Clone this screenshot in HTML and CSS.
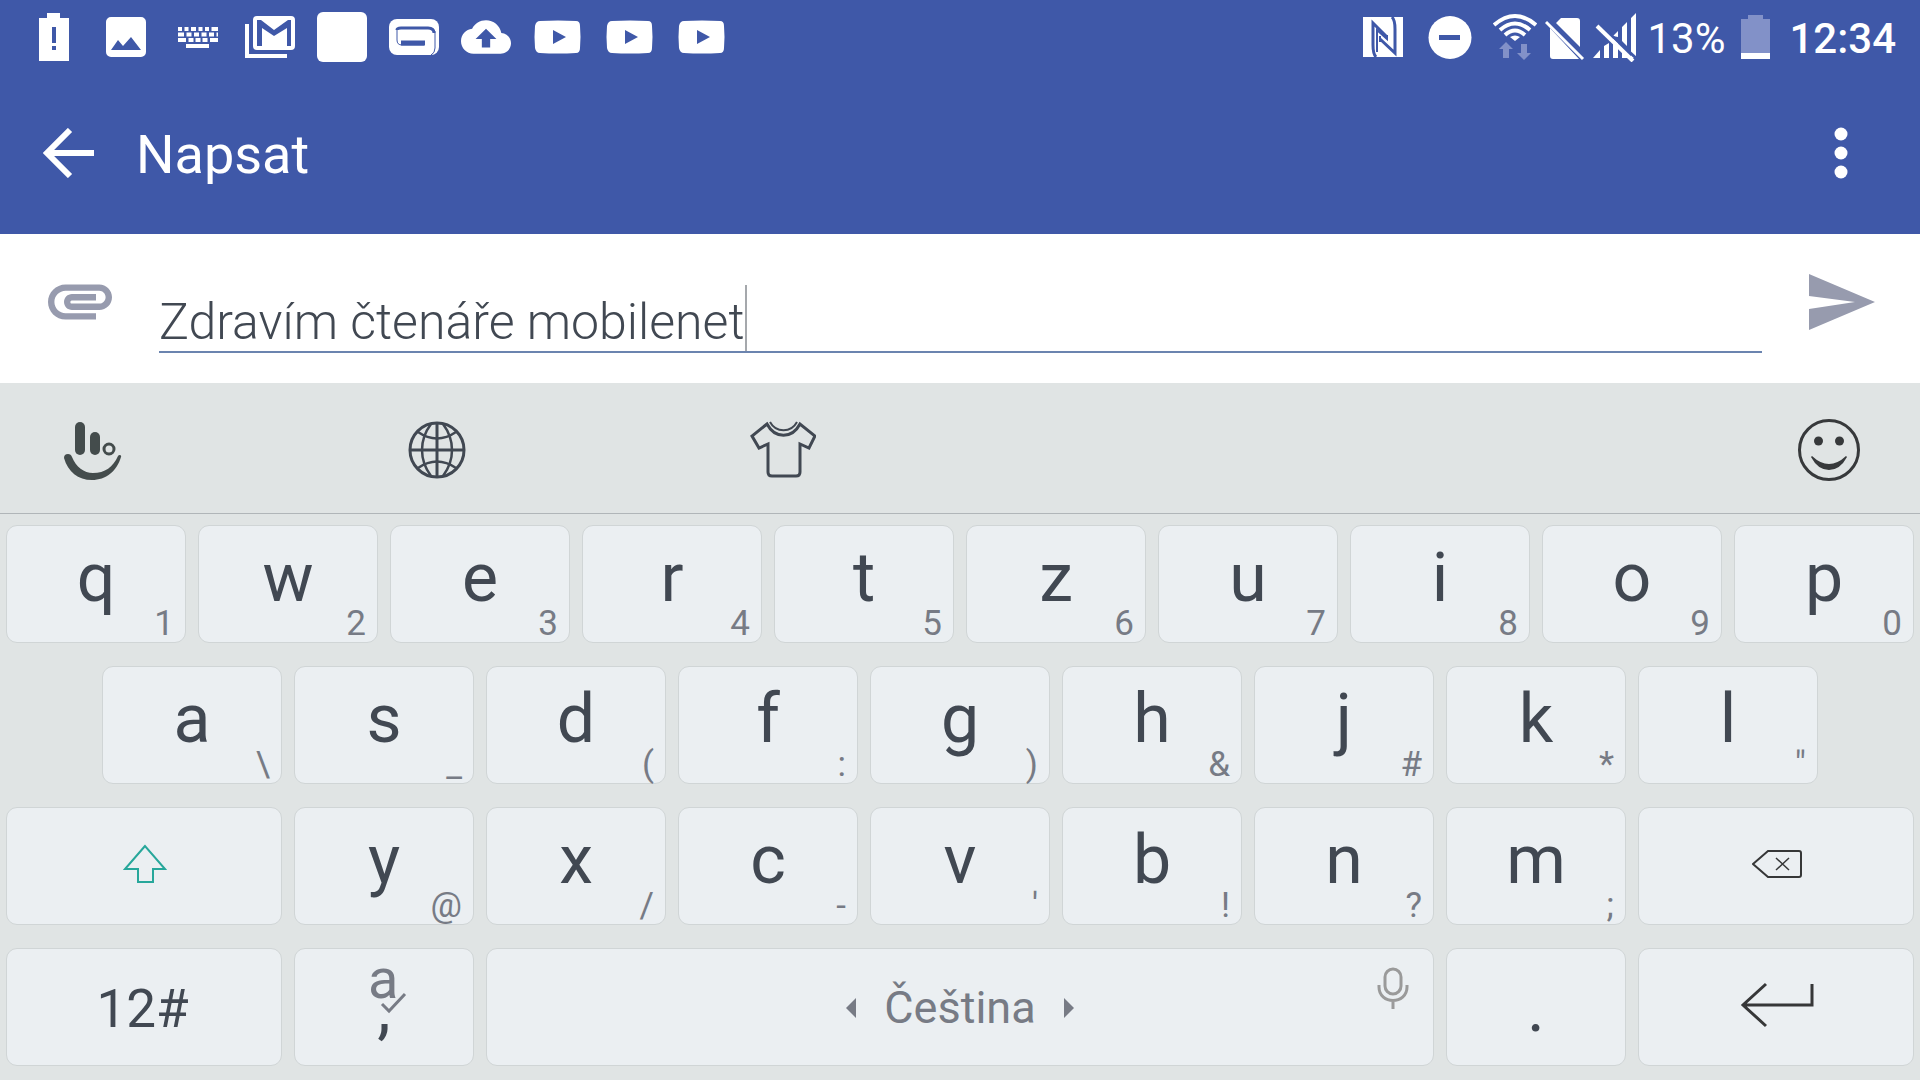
FILE: index.html
```html
<!DOCTYPE html>
<html lang="cs">
<head>
<meta charset="utf-8">
<meta name="viewport" content="width=device-width, initial-scale=1">
<title>Napsat</title>
<link rel="stylesheet" href="styles.css">
</head>
<body>
<header class="top">
  <div class="status">
    <div class="status-left">
      <svg width="50" height="50" viewBox="0 0 50 50" aria-hidden="true"><path fill="currentColor" fill-rule="evenodd" d="M18 1h13v5h9v43H10V6h8zM23 15v16h4V15zM23 34v4h4v-4z"/></svg>
      <svg width="50" height="50" viewBox="0 0 50 50" aria-hidden="true"><path fill="currentColor" fill-rule="evenodd" d="M10 5h30a5 5 0 0 1 5 5v30a5 5 0 0 1-5 5H10a5 5 0 0 1-5-5V10a5 5 0 0 1 5-5zM10 38h30L30 25l-8 9-5-6z"/></svg>
      <svg width="50" height="50" viewBox="0 0 50 50" aria-hidden="true"><g fill="none" stroke="currentColor" stroke-width="4"><path d="M5 17h40" stroke-dasharray="4 2.5 4 2.5 5 2.5 4 2.5 4 2.5 7"/><path d="M5 22.500h40" stroke-dasharray="6 2.500 5 2.500 5 2.500 5 2.500 5 2.500 5"/><path d="M5 28h40" stroke-dasharray="8 2.500 5 2 5 2 5 2.500 8"/><path d="M13 34h23"/></g></svg>
      <svg width="50" height="50" viewBox="0 0 50 50" aria-hidden="true"><path fill="none" stroke="currentColor" stroke-width="4" d="M2 12v32h40"/><path fill="currentColor" fill-rule="evenodd" d="M12 4h34q4 0 4 4v26q0 4-4 4H12q-4 0-4-4V8q0-4 4-4zM12 34h5V16l12 8 13-8v18h4V8h-3L29 18 16 8h-4z"/></svg>
      <svg width="50" height="50" viewBox="0 0 50 50" aria-hidden="true"><rect width="50" height="50" rx="6" fill="currentColor"/></svg>
      <svg width="50" height="50" viewBox="0 0 50 50" aria-hidden="true"><rect y="7" width="50" height="36" rx="8" fill="currentColor"/><g class="cut" fill="none"><path stroke-width="3" d="M8 18q0-2 4-2h27q6 0 6 5"/><path stroke-width="1" d="M8 16v12q0 5 5 5h22M46 19v17q0 5-4 7"/><path stroke-width="5" d="M12 31h24"/></g></svg>
      <svg width="50" height="50" viewBox="0 8 24 24" aria-hidden="true"><path fill="currentColor" d="M19.350 18.040C18.670 14.590 15.640 12 12 12c-2.890 0-5.400 1.640-6.650 4.040C2.340 16.360 0 18.910 0 22c0 3.310 2.690 6 6 6h13c2.760 0 5-2.240 5-5 0-2.640-2.050-4.780-4.650-4.960zM14 21v4h-4v-4H7l5-5 5 5h-3z"/></svg>
      <svg width="50" height="50" viewBox="0 0 50 50" aria-hidden="true"><path fill="currentColor" fill-rule="evenodd" d="M7 9q18-1 36 0 4 0 4 5 1 11 0 22 0 5-4 5-18 1-36 0-4 0-5-5-1-11 0-22 1-5 5-5zM20 18v14l13-7z"/></svg>
      <svg width="50" height="50" viewBox="0 0 50 50" aria-hidden="true"><path fill="currentColor" fill-rule="evenodd" d="M7 9q18-1 36 0 4 0 4 5 1 11 0 22 0 5-4 5-18 1-36 0-4 0-5-5-1-11 0-22 1-5 5-5zM20 18v14l13-7z"/></svg>
      <svg width="50" height="50" viewBox="0 0 50 50" aria-hidden="true"><path fill="currentColor" fill-rule="evenodd" d="M7 9q18-1 36 0 4 0 4 5 1 11 0 22 0 5-4 5-18 1-36 0-4 0-5-5-1-11 0-22 1-5 5-5zM20 18v14l13-7z"/></svg>
    </div>
    <div class="status-right">
      <svg width="57" height="50" viewBox="0 0 57 50" aria-hidden="true"><path fill="currentColor" d="M0 5h40v40H0z"/><g class="cut" fill="none"><path stroke-width="3" d="M13 45q-3-3-3-12V11l14 14"/><path stroke-width="2" d="M14 40V18l10 9v-4"/><path stroke-width="3" d="M29 5q3 3 3 12v24L17 27"/><path stroke-width="2" d="M17 24v6"/></g></svg>
      <svg width="57" height="50" viewBox="0 0 57 50" aria-hidden="true"><circle cx="22" cy="25.500" r="21.500" fill="currentColor"/><path class="cut" stroke-width="5" d="M11 25.500h21"/></svg>
      <svg width="44" height="50" viewBox="0 0 44 50" aria-hidden="true"><g fill="none" stroke="currentColor" stroke-width="4"><path d="M1 13q21-18 42 0"/><path d="M7 18q15-13 30 0"/><path d="M12 23q10-9 20 0"/></g><path fill="currentColor" d="M17 25q5-3 10 0l-5 4z"/><path class="faint" d="M13 30l7 7h-4v9h-6v-9H6zM28 32h6v9h4l-7 7-7-7h4z"/></svg>
      <svg width="40" height="50" viewBox="0 0 40 50" aria-hidden="true"><path fill="currentColor" d="M5 16l29 31H8q-3 0-3-3zM11 11l5-5h16q3 0 3 3v26z"/><path stroke="currentColor" stroke-width="3" d="M1 10l37 37"/></svg>
      <svg width="44" height="50" viewBox="0 0 44 50" aria-hidden="true"><path fill="currentColor" d="M0 46l7-8v8zM11 34l5-3v15h-5zM20 26l5 5v15h-5zM20 24l5-5v6zM29 15l5-5v24l-5-5zM29 38l5 5v3h-5zM38 6l5-5v45h-5z"/><path class="cut" stroke-width="3" d="M8 14l36 33"/><path stroke="currentColor" stroke-width="4" d="M4 14l36 35"/></svg>
      <span class="percent">13%</span>
      <svg width="48" height="50" viewBox="0 0 48 50" aria-hidden="true"><path class="faint" d="M15 3h15v4h7v34H8V7h7z"/><path fill="currentColor" d="M8 41h29v6H8z"/></svg>
      <time class="clock">12:34</time>
    </div>
  </div>
  <div class="appbar">
    <button class="icon-btn" type="button" aria-label="Zpět"><svg width="52" height="50" viewBox="0 0 52 50"><path fill="none" stroke="currentColor" stroke-width="6" d="M51 25H5M27 2L4 25l23 23"/></svg></button>
    <h1 class="title">Napsat</h1>
    <button class="icon-btn menu" type="button" aria-label="Další možnosti"><svg width="14" height="52" viewBox="0 0 14 52" fill="currentColor"><circle cx="7" cy="7" r="6.500"/><circle cx="7" cy="26" r="6.500"/><circle cx="7" cy="45" r="6.500"/></svg></button>
  </div>
</header>

<form class="compose">
  <button class="icon-btn compose-btn" type="button" aria-label="Přiložit"><svg width="64" height="36" viewBox="2 7 20 11"><path fill="currentColor" d="M2 12.500C2 9.460 4.460 7 7.500 7H18c2.210 0 4 1.790 4 4s-1.790 4-4 4H9.500C8.120 15 7 13.880 7 12.500S8.120 10 9.500 10H17v2H9.410c-.55 0-.55 1 0 1H18c1.100 0 2-.9 2-2s-.9-2-2-2H7.500C5.570 9 4 10.570 4 12.500S5.570 16 7.500 16H17v2H7.500C4.460 18 2 15.540 2 12.500z"/></svg></button>
  <label class="field">
    <input class="message" type="text" value="Zdravím čtenáře mobilenet" aria-label="Zpráva">
    <span class="caret"></span>
  </label>
  <button class="icon-btn compose-btn" type="submit" aria-label="Odeslat"><svg width="66" height="56" viewBox="0 0 66 56"><path fill="currentColor" d="M0 0l66 28L0 56V35l46-7L0 22z"/></svg></button>
</form>

<nav class="tools">
  <button class="icon-btn" type="button" aria-label="TouchPal"><svg class="logo" width="64" height="64" viewBox="0 0 64 64"><g fill="none" stroke="currentColor" stroke-linecap="round"><path stroke-width="10" d="M20 9v23"/><path stroke-width="10" d="M35 19v13"/></g><circle cx="49" cy="31" r="5" fill="none" stroke="currentColor" stroke-width="3"/><path fill="currentColor" d="M4 40q0-4 4-4 3 0 4 3c4 10 12 16 21 16 12 0 20-6 25-17 1-2 4-1 3 1-4 14-15 23-29 23C18 62 8 54 4 40z"/></svg></button>
  <button class="icon-btn" type="button" aria-label="Jazyk"><svg width="64" height="64" viewBox="0 0 64 64" fill="none" stroke="currentColor" stroke-width="3"><circle cx="32" cy="32" r="27"/><path d="M32 5v54M5 32h54"/><path stroke-width="2.500" d="M26 6C14 22 14 42 26 58M38 6c12 16 12 36 0 52M13 14q19 13 38 0M13 50q19-13 38 0"/></svg></button>
  <button class="icon-btn" type="button" aria-label="Motivy"><svg width="66" height="64" viewBox="0 0 66 64" fill="none" stroke="currentColor"><path stroke-width="3" d="M17 6L2 18l7 12 9-4v28q0 4 4 4h24q4 0 4-4V26l9 4 6-12L50 6c-8 15-25 15-33 0z"/><path stroke-width="2" d="M20 4c6 11 21 11 27 0"/></svg></button>
  <button class="icon-btn emoji" type="button" aria-label="Emotikony"><svg width="64" height="64" viewBox="0 0 64 64"><circle cx="32" cy="32" r="29.500" fill="none" stroke="currentColor" stroke-width="3"/><g fill="currentColor"><circle cx="21.500" cy="23" r="4.500"/><circle cx="42.500" cy="23" r="4.500"/><path d="M15 38Q32 54 49 38l1 1Q43 52 32 52T14 39z"/></g></svg></button>
</nav>

<main class="keyboard">
  <button class="key" type="button"><span class="letter">q</span><span class="hint">1</span></button>
  <button class="key" type="button"><span class="letter">w</span><span class="hint">2</span></button>
  <button class="key" type="button"><span class="letter">e</span><span class="hint">3</span></button>
  <button class="key" type="button"><span class="letter">r</span><span class="hint">4</span></button>
  <button class="key" type="button"><span class="letter">t</span><span class="hint">5</span></button>
  <button class="key" type="button"><span class="letter">z</span><span class="hint">6</span></button>
  <button class="key" type="button"><span class="letter">u</span><span class="hint">7</span></button>
  <button class="key" type="button"><span class="letter">i</span><span class="hint">8</span></button>
  <button class="key" type="button"><span class="letter">o</span><span class="hint">9</span></button>
  <button class="key" type="button"><span class="letter">p</span><span class="hint">0</span></button>

  <button class="key indent" type="button"><span class="letter">a</span><span class="hint">\</span></button>
  <button class="key" type="button"><span class="letter">s</span><span class="hint">_</span></button>
  <button class="key" type="button"><span class="letter">d</span><span class="hint">(</span></button>
  <button class="key" type="button"><span class="letter">f</span><span class="hint">:</span></button>
  <button class="key" type="button"><span class="letter">g</span><span class="hint">)</span></button>
  <button class="key" type="button"><span class="letter">h</span><span class="hint">&amp;</span></button>
  <button class="key" type="button"><span class="letter">j</span><span class="hint">#</span></button>
  <button class="key" type="button"><span class="letter">k</span><span class="hint">*</span></button>
  <button class="key" type="button"><span class="letter">l</span><span class="hint">"</span></button>

  <button class="key wide command shift" type="button" aria-label="Shift"><svg width="46" height="40" viewBox="0 0 46 40"><path fill="none" stroke="currentColor" stroke-width="2" d="M23 2L3 25h13v13h15V25h12z"/></svg></button>
  <button class="key" type="button"><span class="letter">y</span><span class="hint">@</span></button>
  <button class="key" type="button"><span class="letter">x</span><span class="hint">/</span></button>
  <button class="key" type="button"><span class="letter">c</span><span class="hint">-</span></button>
  <button class="key" type="button"><span class="letter">v</span><span class="hint">'</span></button>
  <button class="key" type="button"><span class="letter">b</span><span class="hint">!</span></button>
  <button class="key" type="button"><span class="letter">n</span><span class="hint">?</span></button>
  <button class="key" type="button"><span class="letter">m</span><span class="hint">;</span></button>
  <button class="key wide command" type="button" aria-label="Smazat"><svg width="50" height="28" viewBox="0 0 50 28" fill="none" stroke="currentColor"><path stroke-width="2" d="M1 14L16 1h31q2 0 2 2v22q0 2-2 2H16z"/><path stroke-width="1.500" d="M24 8l13 12M37 8L24 20"/></svg></button>

  <button class="key wide" type="button"><span class="mode">12#</span></button>
  <button class="key" type="button"><svg class="suggest" width="48" height="66" viewBox="0 0 48 66"><text class="suggest-letter" x="8" y="49">a</text><path fill="none" stroke="currentColor" stroke-width="3" d="M22 55l7 7 16-17"/></svg><span class="punct">,</span></button>
  <button class="key space" type="button">
    <span class="language"><svg width="10" height="20" viewBox="0 0 10 20"><path fill="currentColor" d="M10 0v20L0 10z"/></svg>Čeština<svg width="10" height="20" viewBox="0 0 10 20"><path fill="currentColor" d="M0 0v20l10-10z"/></svg></span>
    <svg class="mic" width="32" height="42" viewBox="0 0 32 42" fill="none" stroke="currentColor" stroke-width="3"><rect x="8" y="2" width="16" height="25" rx="8"/><path d="M2 18v2c0 18 28 18 28 0v-2M16 34v8"/></svg>
  </button>
  <button class="key" type="button"><span class="punct">.</span></button>
  <button class="key wide command" type="button" aria-label="Enter"><svg width="74" height="46" viewBox="0 0 74 46"><path fill="none" stroke="currentColor" stroke-width="3" d="M26 2L3 23l23 21M3 23h69V2"/></svg></button>
</main>
</body>
</html>
```
FILE: styles.css
```css
* { box-sizing: border-box; }

body {
  margin: 0;
  background: #e0e4e4;
  color: #414852;
  font-family: Roboto, "Noto Sans", sans-serif;
}

button, input {
  margin: 0;
  padding: 0;
  border: 0;
  background: none;
  color: inherit;
  font: inherit;
}

svg { display: block; flex: none; }

.top { background: #3f58a8; color: #fff; }

.status {
  display: flex;
  justify-content: space-between;
  align-items: center;
  height: 74px;
  padding: 0 24px 0 29px;
}
.status-left { display: flex; gap: 22px; }
.status-right { display: flex; align-items: center; gap: 8px; }
.percent, .clock { font-size: 42px; line-height: 50px; padding-top: 3px; }
.percent { padding-left: 2px; }
.clock { font-weight: 500; }
.cut { stroke: #3f58a8; }
.faint { fill: #8291c8; }

.appbar {
  display: flex;
  align-items: center;
  height: 160px;
  padding: 0 72px 2px 43px;
}
.title {
  margin: 0 0 0 41px;
  padding-top: 4px;
  font-size: 54px;
  font-weight: 400;
  line-height: 64px;
}
.menu { margin-left: auto; }

.compose {
  display: flex;
  align-items: center;
  gap: 47px;
  padding: 0 45px 0 48px;
  background: #fff;
}
.compose-btn { padding-bottom: 14px; color: #979bae; }
.field {
  display: flex;
  flex: 1;
  min-width: 0;
  margin: 51px 0 30px;
  border-bottom: 2px solid #6b84af;
}
.message {
  field-sizing: content;
  min-width: 0;
  padding-top: 8px;
  outline: 0;
  font-size: 50px;
  font-weight: 300;
  line-height: 58px;
}
.caret { width: 2px; height: 66px; background: #a5a8ac; }

.tools {
  display: flex;
  align-items: center;
  gap: 281px;
  height: 131px;
  padding: 4px 59px 0 60px;
  border-bottom: 1px solid #b0b5b8;
}
.logo { color: #444c4c; }
.emoji { margin-left: auto; color: #37393b; }

.keyboard {
  display: grid;
  grid-template-columns: repeat(20, 1fr);
  grid-auto-rows: 118px;
  gap: 23px 12px;
  padding: 11px 6px 14px;
}
.key {
  display: grid;
  grid-template: 1fr / 1fr;
  grid-column: span 2;
  place-items: center;
  min-width: 0;
  border: 1px solid #d0d5d6;
  border-radius: 11px;
  background: #ebeff2;
}
.key > * { grid-area: 1 / 1; }
.wide { grid-column: span 3; }
.space { grid-column: span 10; }
.indent { grid-column: 2 / span 2; }

.letter, .punct { font-size: 68px; line-height: 80px; }
.letter { padding-bottom: 12px; }
.punct { padding-top: 2px; }
.hint {
  place-self: end;
  padding: 0 11px 1px 0;
  color: #777b85;
  font-size: 35px;
  line-height: 35px;
}
.mode { padding: 4px 3px 0 0; font-size: 53px; line-height: 64px; }
.command { padding: 0 0 4px 2px; color: #363738; }
.shift { color: #27a79b; }
.suggest { align-self: start; overflow: visible; color: #777b85; }
.suggest-letter { fill: currentColor; font-size: 56px; }
.language {
  display: flex;
  align-items: center;
  gap: 28px;
  padding-top: 2px;
  color: #777b85;
  font-size: 45px;
  line-height: 52px;
}
.mic { place-self: start end; margin: 18px 24px 0 0; color: #9a9a9a; }
```
